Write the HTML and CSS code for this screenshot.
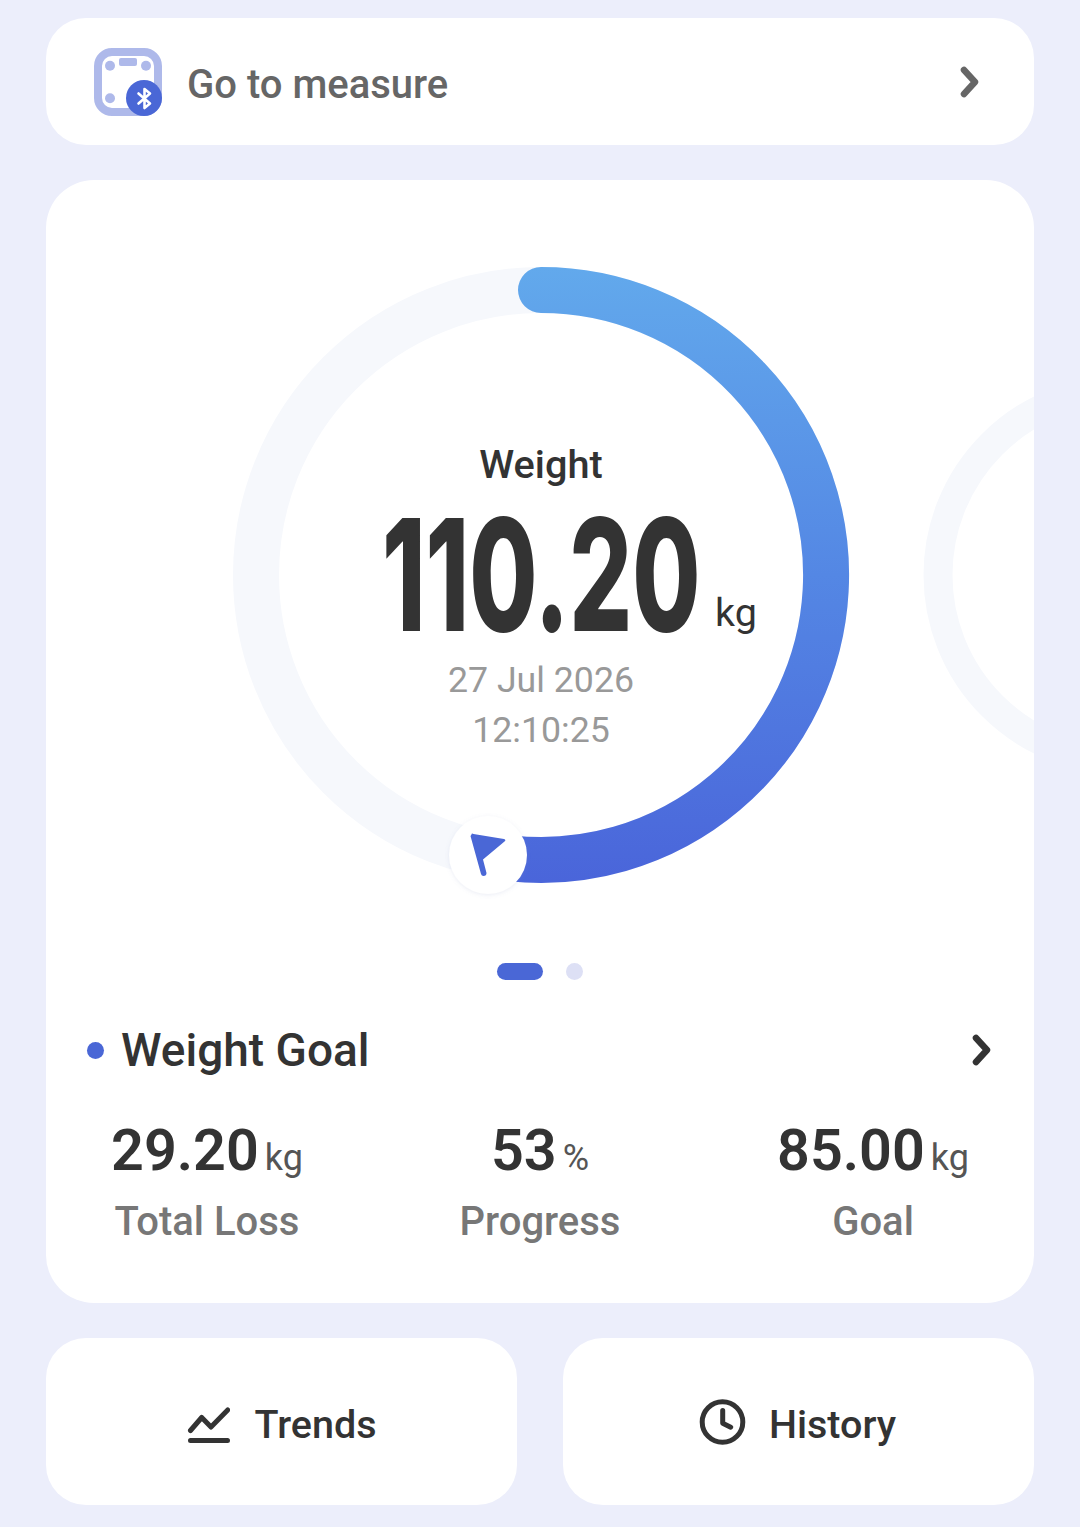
FILE: index.html
```html
<!DOCTYPE html>
<html lang="en">
<head>
<meta charset="utf-8">
<title>Weight</title>
<link rel="stylesheet" href="styles.css">
</head>
<body>
<main class="page">
  <a class="card measure">
    <svg class="scale-icon" width="68" height="68" viewBox="0 0 68 68">
      <rect x="4" y="4" width="60" height="60" rx="14" fill="#fff" stroke="#AEB9EA" stroke-width="8"/>
      <circle cx="16" cy="17.700" r="5" fill="#AEB9EA"/>
      <circle cx="52" cy="17.700" r="5" fill="#AEB9EA"/>
      <circle cx="16" cy="50.300" r="5" fill="#AEB9EA"/>
      <rect x="25" y="10" width="18" height="8" rx="2" fill="#AEB9EA"/>
      <circle cx="50" cy="50" r="18" fill="#4A67D6"/>
      <path d="M44.500 45.500 L56 55.500 L50.500 60 V41 L56 45.500 L44.500 55.500" fill="none" stroke="#fff" stroke-width="2.600" stroke-linejoin="round" stroke-linecap="round"/>
    </svg>
    <span class="measure-text">Go to measure</span>
    <svg class="chevron chevron-grey" width="24" height="36" viewBox="0 0 24 36"><path d="M6 6 L17 18 L6 30" /></svg>
  </a>

  <section class="card main">
    <div class="carousel">
      <svg class="rings" width="988" height="780" viewBox="46 180 988 780">
        <defs>
          <linearGradient id="arc" gradientUnits="userSpaceOnUse" x1="541" y1="267" x2="541" y2="883">
            <stop offset="0" stop-color="#62A9EC"/>
            <stop offset="0.5" stop-color="#5487E4"/>
            <stop offset="1" stop-color="#4A65DA"/>
          </linearGradient>
          <filter id="soft" x="-30%" y="-30%" width="160%" height="160%">
            <feDropShadow dx="0" dy="1" stdDeviation="2" flood-color="#8090c0" flood-opacity="0.16"/>
          </filter>
        </defs>
        <circle cx="541" cy="575" r="285" fill="none" stroke="#F6F8FC" stroke-width="46"/>
        <circle cx="1123" cy="575" r="185" fill="none" stroke="#F6F8FC" stroke-width="29"/>
        <path d="M541 290 A285 285 0 1 1 510 858.300" fill="none" stroke="url(#arc)" stroke-width="46" stroke-linecap="round"/>
        <circle cx="488" cy="855" r="39" fill="#fff" filter="url(#soft)"/>
        <path d="M471.500 834.500 Q471.500 833 473.500 834 L504 839 Q506.500 840 504.500 841.500 L483 859.500 L486.500 873 Q486.500 876 483.500 876 Q481.500 876 481 874 L470.500 836 Z" fill="#4A67D6"/>
      </svg>
      <div class="reading">
        <div class="reading-label">Weight</div>
        <div class="reading-value"><span class="big">110.20</span><span class="big-unit">kg</span></div>
        <div class="reading-date">27 Jul 2026<br>12:10:25</div>
      </div>
    </div>
    <div class="pager"><span class="pager-active"></span><span class="pager-dot"></span></div>

    <div class="goal-head">
      <span class="goal-dot"></span>
      <h2 class="goal-title">Weight Goal</h2>
      <svg class="chevron chevron-dark" width="24" height="36" viewBox="0 0 24 36"><path d="M6 6 L17 18 L6 30" /></svg>
    </div>
    <div class="stats">
      <div class="stat"><div class="stat-value">29.20<span class="stat-unit">kg</span></div><div class="stat-label">Total Loss</div></div>
      <div class="stat"><div class="stat-value">53<span class="stat-unit">%</span></div><div class="stat-label">Progress</div></div>
      <div class="stat"><div class="stat-value">85.00<span class="stat-unit">kg</span></div><div class="stat-label">Goal</div></div>
    </div>
  </section>

  <nav class="actions">
    <a class="card action">
      <svg width="44" height="44" viewBox="0 0 44 44"><path class="ico" d="M4.500 30.500 L15.700 17.500 L25 27 L41.700 10 M4.500 40.500 H41.500"/></svg>
      <span class="action-text">Trends</span>
    </a>
    <a class="card action">
      <svg class="clock" width="48" height="48" viewBox="0 0 48 48"><circle class="ico" cx="23.500" cy="24" r="20.300"/><path class="ico" d="M23.700 12.500 V25.200 L31.700 29.200"/></svg>
      <span class="action-text">History</span>
    </a>
  </nav>
</main>
</body>
</html>
```

FILE: styles.css
```css
* { box-sizing: border-box; }
html, body { margin: 0; padding: 0; }
body {
  background: #ECEEFB;
  font-family: Roboto, "Liberation Sans", sans-serif;
  color: #333;
  width: 1080px;
  height: 1527px;
  overflow: hidden;
}
.page {
  display: flex;
  flex-direction: column;
  gap: 35px;
  padding: 18px 46px 0;
}
.card { background: #fff; }
.measure {
  display: flex;
  align-items: center;
  height: 127px;
  border-radius: 40px;
  padding: 0 52px 0 48px;
}
.scale-icon { margin-top: 1px; }
.measure-text {
  flex: 1;
  margin-left: 25px;
  padding-top: 5px;
  font-size: 40px;
  font-weight: 500;
  color: #666;
}
.chevron path { fill: none; stroke-width: 6.500; stroke-linecap: round; stroke-linejoin: round; }
.chevron-grey path { stroke: #666; }
.chevron-dark path { stroke: #333; }
.main {
  height: 1123px;
  border-radius: 48px;
  overflow: hidden;
  display: flex;
  flex-direction: column;
}
.carousel { position: relative; height: 780px; }
.rings { display: block; }
.reading {
  position: absolute;
  left: 245px;
  top: 258px;
  width: 500px;
  text-align: center;
}
.reading-label { font-size: 39.700px; font-weight: 500; line-height: 52px; color: #333; padding-top: 1px; }
.reading-value {
  display: flex;
  justify-content: flex-start;
  align-items: baseline;
  height: 164px;
  line-height: 150px;
  padding-left: 91px;
  padding-top: 9px;
}
.big {
  display: inline-block;
  width: 315px;
  font-family: Inter, Roboto, sans-serif;
  font-size: 156px;
  font-weight: 800;
  color: #333;
  white-space: nowrap;
  text-align: left;
  transform: scaleX(0.633);
  transform-origin: left center;
}
.big-unit { font-size: 39.500px; margin-left: 18px; color: #333; transform: translateY(-5px); }
.reading-date { font-size: 35.700px; line-height: 50px; color: #999; }
.pager { display: flex; justify-content: center; align-items: center; gap: 23px; margin-top: 3px; padding-right: 1px; }
.pager-active { width: 46px; height: 17px; border-radius: 9px; background: #4A67D6; }
.pager-dot { width: 17px; height: 17px; border-radius: 50%; background: #DDE0F5; }
.goal-head {
  display: flex;
  align-items: center;
  height: 60px;
  margin-top: 40px;
  padding: 0 40px 0 41px;
}
.goal-dot { width: 17px; height: 17px; border-radius: 50%; background: #4A67D6; }
.goal-title { flex: 1; margin: 0 0 0 17px; font-size: 46px; font-weight: 500; color: #333; }
.stats {
  display: grid;
  grid-template-columns: repeat(3, 333px);
  justify-content: center;
  margin-top: 35px;
  text-align: center;
}
.stat-value { font-size: 57.500px; font-weight: 600; line-height: 72px; color: #333; }
.stat-unit { font-size: 36px; font-weight: 400; margin-left: 6px; color: #555; }
.stat-label { font-size: 40px; font-weight: 500; line-height: 52px; color: #777; margin-top: 2px; }
.actions { display: flex; gap: 46px; }
.action {
  flex: 1;
  display: flex;
  align-items: center;
  justify-content: center;
  gap: 24px;
  height: 167px;
  border-radius: 40px;
  font-size: 39.500px;
  font-weight: 500;
  color: #333;
}
.action-text { padding-top: 6px; }
.clock { margin: 0 -2px; }
.ico { fill: none; stroke: #333; stroke-width: 5; stroke-linecap: round; stroke-linejoin: round; }
```
